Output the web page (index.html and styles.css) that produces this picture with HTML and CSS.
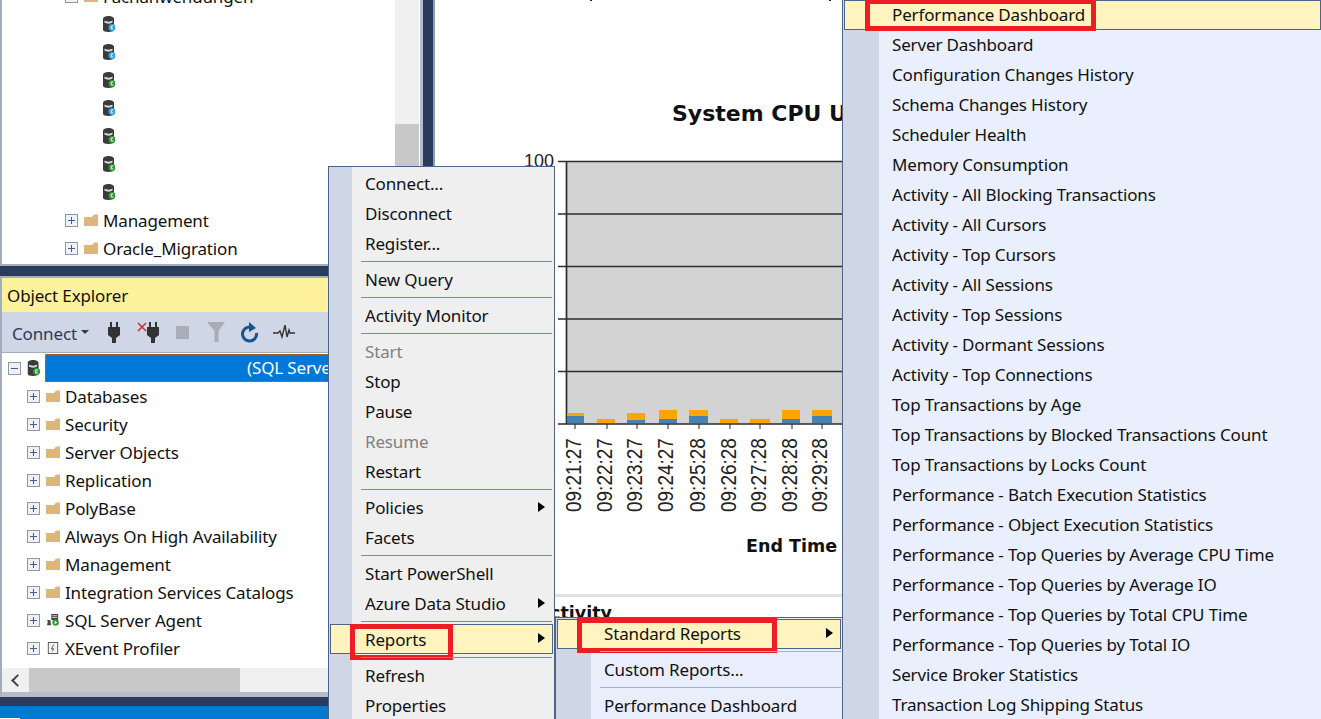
FILE: index.html
```html
<!DOCTYPE html>
<html lang="en">
<head>
<meta charset="utf-8">
<title>SQL Server Management Studio</title>
<link rel="stylesheet" href="styles.css">
</head>
<body>
<svg class="defs" width="0" height="0" aria-hidden="true">
  <symbol id="plus" viewBox="0 0 13 13"><rect x=".5" y=".5" width="12" height="12" fill="#f1f1f3" stroke="#8f97a6"/><path d="M3 6.5h7M6.5 3v7" stroke="#3c5f94" fill="none"/></symbol>
  <symbol id="minus" viewBox="0 0 13 13"><rect x=".5" y=".5" width="12" height="12" fill="#f1f1f3" stroke="#8f97a6"/><path d="M3 6.5h7" stroke="#3c5f94" fill="none"/></symbol>
  <symbol id="folder" viewBox="0 0 14 12"><path d="M0 3h8l2-2.500h4V12H0z" fill="#dcb67a"/></symbol>
  <symbol id="db" viewBox="0 0 12 16"><path d="M0 3c0-4 11-4 11 0v11c0 2.500-11 2.500-11 0z" fill="#3b3b3b"/><path d="M1.500 4.500c2 1.500 6 1.500 8 0v2c-2 1.500-6 1.500-8 0z" fill="#d8d8d8"/></symbol>
  <symbol id="db-blue" viewBox="0 0 12 16"><use href="#db" width="12" height="16"/><circle cx="9" cy="11.500" r="3.600" fill="#2a9fe6"/><path d="M10.300 10h-2v3h2" stroke="#fff" fill="none"/></symbol>
  <symbol id="db-green" viewBox="0 0 12 16"><use href="#db" width="12" height="16"/><circle cx="9" cy="11.500" r="3.600" fill="#2e9a35"/><path d="M10.300 10h-2v3h2" stroke="#fff" fill="none"/></symbol>
  <symbol id="plug" viewBox="0 0 12 21"><path d="M2 0h2v5h4V0h2v5h2v8l-4 3v5H4v-5l-4-3V5h2z" fill="#333"/></symbol>
</svg>

<div class="workspace">
  <div class="left">
    <section class="registered">
      <div class="tree tree-top">
        <div class="row lvl2"><svg class="box"><use href="#minus"/></svg><svg class="fold"><use href="#folder"/></svg><span>Fachanwendungen</span></div>
        <div class="row lvl3"><svg class="dbi"><use href="#db-blue"/></svg></div>
        <div class="row lvl3"><svg class="dbi"><use href="#db-blue"/></svg></div>
        <div class="row lvl3"><svg class="dbi"><use href="#db-green"/></svg></div>
        <div class="row lvl3"><svg class="dbi"><use href="#db-blue"/></svg></div>
        <div class="row lvl3"><svg class="dbi"><use href="#db-green"/></svg></div>
        <div class="row lvl3"><svg class="dbi"><use href="#db-green"/></svg></div>
        <div class="row lvl3"><svg class="dbi"><use href="#db-green"/></svg></div>
        <div class="row lvl2"><svg class="box"><use href="#plus"/></svg><svg class="fold"><use href="#folder"/></svg><span>Management</span></div>
        <div class="row lvl2"><svg class="box"><use href="#plus"/></svg><svg class="fold"><use href="#folder"/></svg><span>Oracle_Migration</span></div>
      </div>
      <div class="vscroll"><div class="vtrack"></div><div class="vthumb"></div></div>
    </section>
    <div class="hsplit"></div>
    <section class="explorer">
      <h2 class="title">Object Explorer</h2>
      <div class="toolbar">
        <span class="connect">Connect</span><span class="caret"></span>
        <svg class="t-plug"><use href="#plug"/></svg>
        <svg class="t-xplug" viewBox="0 0 22 21"><path d="M1 1l8 8M9 1L1 9" stroke="#b5392a" stroke-width="1.500" fill="none"/><use href="#plug" x="10" width="12" height="21"/></svg>
        <span class="t-stop"></span>
        <svg class="t-filter" viewBox="0 0 18 20"><path d="M0 0h18l-6.500 9v11h-4V9z" fill="#a9adb3"/></svg>
        <svg class="t-refresh" viewBox="0 0 18 21"><path d="M12.500 6.200A7 7 0 1 0 15.500 11" stroke="#14548f" stroke-width="3" fill="none"/><path d="M8 0l7 6-7 4z" fill="#14548f"/></svg>
        <svg class="t-pulse" viewBox="0 0 22 14"><path d="M0 8h5l2-2 2 6 3-12 2 12 2-7 1 3h5" stroke="#333" stroke-width="1.400" fill="none"/></svg>
      </div>
      <div class="tree tree-oe">
        <div class="row server"><svg class="box"><use href="#minus"/></svg><svg class="srv"><use href="#db-green"/></svg><span class="sel">(SQL Server 15.0)</span></div>
        <div class="row lvl1"><svg class="box"><use href="#plus"/></svg><svg class="fold"><use href="#folder"/></svg><span>Databases</span></div>
        <div class="row lvl1"><svg class="box"><use href="#plus"/></svg><svg class="fold"><use href="#folder"/></svg><span>Security</span></div>
        <div class="row lvl1"><svg class="box"><use href="#plus"/></svg><svg class="fold"><use href="#folder"/></svg><span>Server Objects</span></div>
        <div class="row lvl1"><svg class="box"><use href="#plus"/></svg><svg class="fold"><use href="#folder"/></svg><span>Replication</span></div>
        <div class="row lvl1"><svg class="box"><use href="#plus"/></svg><svg class="fold"><use href="#folder"/></svg><span>PolyBase</span></div>
        <div class="row lvl1"><svg class="box"><use href="#plus"/></svg><svg class="fold"><use href="#folder"/></svg><span>Always On High Availability</span></div>
        <div class="row lvl1"><svg class="box"><use href="#plus"/></svg><svg class="fold"><use href="#folder"/></svg><span>Management</span></div>
        <div class="row lvl1"><svg class="box"><use href="#plus"/></svg><svg class="fold"><use href="#folder"/></svg><span>Integration Services Catalogs</span></div>
        <div class="row lvl1"><svg class="box"><use href="#plus"/></svg><svg class="fold" viewBox="0 0 14 14"><path d="M5 0h8v7H5z" fill="#444"/><path d="M6 2h6M6 4h6" stroke="#ddd"/><path d="M0 7h4v2l1 4H0l1-4z" fill="#444"/><circle cx="10" cy="10" r="3.800" fill="#2e9a35"/><path d="M9 8l3 2-3 2z" fill="#fff"/></svg><span>SQL Server Agent</span></div>
        <div class="row lvl1"><svg class="box"><use href="#plus"/></svg><svg class="fold" viewBox="0 0 14 14"><rect x="1.500" y=".5" width="11" height="13" fill="#f4f4f4" stroke="#444"/><path d="M8 3L5 8h3l-2 3" stroke="#444" fill="none"/></svg><span>XEvent Profiler</span></div>
      </div>
      <div class="hscroll"><span class="harrow"></span><div class="hthumb"></div></div>
    </section>
    <div class="hsplit hsplit-low"></div>
    <div class="statusbar"></div>
  </div>
  <div class="vsplit"></div>
  <main class="report">
    <svg class="chart" viewBox="435 0 886 719" width="886" height="719">
      <path d="M590 0h2v1h-2zM829 0h2v1h-2z" fill="#222"/>
      <text class="r-title" x="672" y="121">System CPU Utilization</text>
      <rect x="566" y="161" width="300" height="263" fill="#d3d3d3"/>
      <g class="grid">
        <path d="M558 161.500H860M558 214H860M558 266.500H860M558 319H860M558 371.500H860M558 424H860"/>
        <path d="M566.500 161V424"/>
      </g>
      <g class="ticks"><path d="M575 424v5M607 424v5M637 424v5M668 424v5M699 424v5M730 424v5M760 424v5M792 424v5M822 424v5"/></g>
      <text class="r-axis" x="554" y="167" text-anchor="end">100</text>
      <g fill="#ffa500">
        <rect x="567" y="413" width="17" height="3"/><rect x="597" y="419" width="18" height="4"/><rect x="627" y="413" width="18" height="7"/>
        <rect x="659" y="410" width="18" height="9"/><rect x="689" y="410" width="19" height="6"/><rect x="720" y="419" width="18" height="4"/>
        <rect x="750" y="419" width="20" height="4"/><rect x="782" y="410" width="18" height="9"/><rect x="812" y="410" width="20" height="6"/>
      </g>
      <g fill="#4682b4">
        <rect x="567" y="416" width="17" height="7"/><rect x="627" y="420" width="18" height="3"/><rect x="659" y="419" width="18" height="4"/>
        <rect x="689" y="416" width="19" height="7"/><rect x="782" y="419" width="18" height="4"/><rect x="812" y="416" width="20" height="7"/>
      </g>
      <g class="r-time">
        <text transform="translate(581 512) rotate(-90) scale(1 1.120)">09:21:27</text>
        <text transform="translate(612 512) rotate(-90) scale(1 1.120)">09:22:27</text>
        <text transform="translate(642 512) rotate(-90) scale(1 1.120)">09:23:27</text>
        <text transform="translate(673 512) rotate(-90) scale(1 1.120)">09:24:27</text>
        <text transform="translate(705 512) rotate(-90) scale(1 1.120)">09:25:28</text>
        <text transform="translate(736 512) rotate(-90) scale(1 1.120)">09:26:28</text>
        <text transform="translate(766 512) rotate(-90) scale(1 1.120)">09:27:28</text>
        <text transform="translate(797 512) rotate(-90) scale(1 1.120)">09:28:28</text>
        <text transform="translate(827 512) rotate(-90) scale(1 1.120)">09:29:28</text>
      </g>
      <text class="r-label" x="746" y="552">End Time</text>
      <rect x="435" y="594" width="410" height="3" fill="#e2e2e2"/>
      <text class="r-label" x="612" y="619" text-anchor="end">Activity</text>
    </svg>
  </main>
</div>

<nav class="menu ctx">
  <div class="item">Connect...</div>
  <div class="item">Disconnect</div>
  <div class="item">Register...</div>
  <div class="sep"></div>
  <div class="item">New Query</div>
  <div class="sep"></div>
  <div class="item">Activity Monitor</div>
  <div class="sep"></div>
  <div class="item off">Start</div>
  <div class="item">Stop</div>
  <div class="item">Pause</div>
  <div class="item off">Resume</div>
  <div class="item">Restart</div>
  <div class="sep"></div>
  <div class="item sub">Policies</div>
  <div class="item">Facets</div>
  <div class="sep"></div>
  <div class="item">Start PowerShell</div>
  <div class="item sub">Azure Data Studio</div>
  <div class="sep"></div>
  <div class="item sub hot">Reports<i class="mark mark-reports"></i></div>
  <div class="sep"></div>
  <div class="item">Refresh</div>
  <div class="item">Properties</div>
</nav>

<nav class="menu sub1">
  <div class="item sub hot">Standard Reports<i class="mark mark-standard"></i></div>
  <div class="sep"></div>
  <div class="item">Custom Reports...</div>
  <div class="sep"></div>
  <div class="item">Performance Dashboard</div>
</nav>

<nav class="menu sub2">
  <div class="item hot">Performance Dashboard<i class="mark mark-perf"></i></div>
  <div class="item">Server Dashboard</div>
  <div class="item">Configuration Changes History</div>
  <div class="item">Schema Changes History</div>
  <div class="item">Scheduler Health</div>
  <div class="item">Memory Consumption</div>
  <div class="item">Activity - All Blocking Transactions</div>
  <div class="item">Activity - All Cursors</div>
  <div class="item">Activity - Top Cursors</div>
  <div class="item">Activity - All Sessions</div>
  <div class="item">Activity - Top Sessions</div>
  <div class="item">Activity - Dormant Sessions</div>
  <div class="item">Activity - Top Connections</div>
  <div class="item">Top Transactions by Age</div>
  <div class="item">Top Transactions by Blocked Transactions Count</div>
  <div class="item">Top Transactions by Locks Count</div>
  <div class="item">Performance - Batch Execution Statistics</div>
  <div class="item">Performance - Object Execution Statistics</div>
  <div class="item">Performance - Top Queries by Average CPU Time</div>
  <div class="item">Performance - Top Queries by Average IO</div>
  <div class="item">Performance - Top Queries by Total CPU Time</div>
  <div class="item">Performance - Top Queries by Total IO</div>
  <div class="item">Service Broker Statistics</div>
  <div class="item">Transaction Log Shipping Status</div>
</nav>
</body>
</html>
```
FILE: styles.css
```css
html, body { margin: 0; height: 719px; overflow: hidden; }
body { position: relative; font: 17px "Noto Sans", sans-serif; letter-spacing: -0.15px; color: #111; background: #fff; }
.defs { position: absolute; }

.workspace { display: flex; height: 719px; }
.left { width: 423px; flex: none; display: flex; flex-direction: column; background: #2a3b5c; }
.vsplit { width: 10px; flex: none; background: #2a3b5c; border-right: 2px solid #8f9dbd; }

.registered { height: 266px; flex: none; display: flex; overflow: hidden; box-sizing: border-box; background: #fff; border-left: 2px solid #a3adbf; border-bottom: 2px solid #a3adbf; border-right: 3px solid #b4bdd4; }
.tree-top { flex: 1; margin-top: -18px; min-width: 0; }
.vscroll { width: 24px; flex: none; display: flex; flex-direction: column; margin-right: 1px; }
.vtrack { height: 124px; background: #f0f0f0; }
.vthumb { flex: 1; background: #c8c8c8; }

.hsplit { height: 10px; flex: none; }
.explorer { height: 421px; flex: none; display: flex; flex-direction: column; box-sizing: border-box; background: #fff; border-left: 2px solid #a3adbf; border-top: 2px solid #a3adbf; border-bottom: 5px solid #b5bccb; }
.hsplit-low { height: 9px; }
.statusbar { flex: 1; position: relative; background: #007acc; }
.statusbar::before { content: ""; position: absolute; left: 0; bottom: 0; width: 20px; height: 1px; background: #fff; }

.title { margin: 0; height: 34px; flex: none; padding-left: 5px; display: flex; align-items: center; font-size: 17px; font-weight: 400; background: #fff29d; }
.toolbar { height: 41px; flex: none; box-sizing: border-box; display: flex; align-items: center; background: #cfd6e5; border-bottom: 1px solid #a3adbf; padding-left: 10px; }
.connect { color: #2a3b5c; padding-top: 2px; }
.caret { margin-left: 4px; border: 4.5px solid transparent; border-top-color: #2a3b5c; border-bottom: 0; }
.t-plug { width: 12px; height: 21px; margin-left: 19px; }
.t-xplug { width: 22px; height: 21px; margin-left: 17px; }
.t-stop { width: 13px; height: 13px; margin-left: 17px; background: #a9adb8; }
.t-filter { width: 18px; height: 20px; margin-left: 18px; }
.t-refresh { width: 18px; height: 21px; margin-left: 16px; }
.t-pulse { width: 22px; height: 14px; margin-left: 14px; }

.tree-oe { flex: 1; min-height: 0; overflow: hidden; }
.row { height: 28px; display: flex; align-items: center; white-space: nowrap; }
.box { width: 13px; height: 13px; flex: none; }
.fold { width: 14px; height: 12px; margin-left: 6px; margin-right: 5px; flex: none; }
.dbi { width: 12px; height: 16px; flex: none; }
.srv { width: 13px; height: 16px; flex: none; margin-left: 6px; margin-right: 5px; }
.lvl1 { padding-left: 25px; }
.lvl2 { padding-left: 63px; }
.lvl3 { padding-left: 101px; }
.server { padding-left: 6px; height: 29px; padding-top: 1px; box-sizing: border-box; }
.sel { flex: 1; height: 28px; box-sizing: border-box; border: 1px dotted #b5793a; background: #0078d7; color: #fff; padding-left: 201px; line-height: 26px; }

.hscroll { height: 24px; flex: none; margin-top: auto; display: flex; align-items: center; background: #f0f0f0; padding-left: 11px; }
.harrow { width: 7px; height: 7px; border-left: 2.500px solid #444; border-bottom: 2.500px solid #444; transform: rotate(45deg); }
.hthumb { width: 211px; height: 24px; margin-left: 7px; background: #c8c8c8; }

.report { flex: 1; min-width: 0; background: #fff; overflow: hidden; }
.chart { display: block; }
.grid path { stroke: #2d2d2d; stroke-width: 1.700; fill: none; }
.ticks path { stroke: #222; stroke-width: 1; fill: none; }
.r-title { font: 700 22px "DejaVu Sans", sans-serif; letter-spacing: 0; fill: #111; }
.r-axis { font: 18px "Liberation Sans", sans-serif; letter-spacing: 0; fill: #222; }
.r-time text { font: 19px "Liberation Sans", sans-serif; letter-spacing: 0; fill: #222; }
.r-label { font: 700 17.500px "DejaVu Sans", sans-serif; letter-spacing: 0; fill: #111; }

.menu { position: absolute; box-sizing: border-box; overflow: hidden; white-space: nowrap; }
.item { position: relative; height: 30px; line-height: 29px; box-sizing: border-box; padding-left: 35px; }
.sep { height: 6px; box-sizing: border-box; position: relative; }
.sep::after { content: ""; position: absolute; left: 31px; right: 1px; top: 2px; height: 1px; background: #7f8aa5; }
.off { color: #808080; }
.sub::after { content: ""; position: absolute; right: 8px; top: 9px; border: 5.500px solid transparent; border-left: 7px solid #000; border-right: 0; }
.hot { background: #fff3bf; outline: 1px solid #4e6388; outline-offset: -1px; line-height: 30px; }

.ctx { left: 328px; top: 166px; width: 227px; height: 553px; padding: 2px 1px 0; border: 1px solid #4e6388; border-bottom: 0; background: linear-gradient(to right, #cfd6e5 23px, #efefef 23px); }
.ctx .hot { margin-top: -1px; margin-bottom: 1px; line-height: 32px; }
.sub1 { left: 555px; top: 617px; width: 288px; height: 102px; padding: 1px 1px 0; border: 1px solid #4e6388; border-bottom: 0; background: linear-gradient(to right, #cfd6e5 35px, #e8eefc 35px); }
.sub1 .item { padding-left: 47px; }
.sub1 .sep::after { left: 43px; right: 0; background: #a7b0c6; }
.sub2 { left: 842px; top: 0; width: 479px; height: 719px; padding-left: 1px; border-left: 1px solid #4e6388; background: linear-gradient(to right, #cfd6e5 36px, #e9effd 36px); }
.sub2 .item { padding-left: 48px; line-height: 30px; }

.mark { position: absolute; box-sizing: border-box; border: 5px solid #ee1c25; }
.mark-reports { left: 20px; top: 0; width: 103px; height: 36px; }
.mark-standard { left: 20px; top: -1px; width: 200px; height: 35px; }
.mark-perf { left: 21px; top: -1px; width: 231px; height: 32px; }
```
